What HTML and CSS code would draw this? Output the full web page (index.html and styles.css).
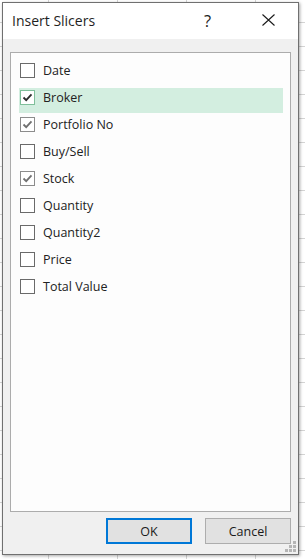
FILE: index.html
```html
<!DOCTYPE html>
<html lang="en">
<head>
    <meta charset="UTF-8">
    <meta name="viewport" content="width=device-width, initial-scale=1.0">
    <title>Insert Slicers</title>
    <link rel="stylesheet" href="styles.css">
</head>
<body>
    <div class="dialog">
        <div class="title-bar">
            <div class="title">Insert Slicers</div>
            <div class="help">?</div>
            <div class="close">
                <svg width="13" height="12" viewBox="0 0 13 12">
                    <path d="M0.5 0.5 L12.5 11.5 M12.5 0.5 L0.5 11.5" stroke="#1a1a1a" stroke-width="1.1" fill="none"/>
                </svg>
            </div>
        </div>

        <div class="dialog-body">
            <div class="field-list">
                <div class="field-row">
                    <span class="checkbox"></span>
                    <span class="field-name">Date</span>
                </div>
                <div class="field-row selected">
                    <span class="checkbox checked focus">
                        <svg width="13" height="13" viewBox="0 0 13 13"><path d="M2.5 6.5 L5.2 9.2 L10.5 3.3" stroke="#2b2b2b" stroke-width="1.8" fill="none"/></svg>
                    </span>
                    <span class="field-name">Broker</span>
                </div>
                <div class="field-row">
                    <span class="checkbox checked">
                        <svg width="13" height="13" viewBox="0 0 13 13"><path d="M2.5 6.5 L5.2 9.2 L10.5 3.3" stroke="#707070" stroke-width="1.8" fill="none"/></svg>
                    </span>
                    <span class="field-name">Portfolio No</span>
                </div>
                <div class="field-row">
                    <span class="checkbox"></span>
                    <span class="field-name">Buy/Sell</span>
                </div>
                <div class="field-row">
                    <span class="checkbox checked">
                        <svg width="13" height="13" viewBox="0 0 13 13"><path d="M2.5 6.5 L5.2 9.2 L10.5 3.3" stroke="#707070" stroke-width="1.8" fill="none"/></svg>
                    </span>
                    <span class="field-name">Stock</span>
                </div>
                <div class="field-row">
                    <span class="checkbox"></span>
                    <span class="field-name">Quantity</span>
                </div>
                <div class="field-row">
                    <span class="checkbox"></span>
                    <span class="field-name">Quantity2</span>
                </div>
                <div class="field-row">
                    <span class="checkbox"></span>
                    <span class="field-name">Price</span>
                </div>
                <div class="field-row">
                    <span class="checkbox"></span>
                    <span class="field-name">Total Value</span>
                </div>
            </div>

            <div class="buttons">
                <button class="btn btn-default">OK</button>
                <button class="btn">Cancel</button>
            </div>
        </div>

        <div class="grip">
            <svg width="12" height="12" viewBox="0 0 12 12" fill="#b5b5b5">
                <rect x="8" y="0" width="3" height="3"/>
                <rect x="4" y="4" width="3" height="3"/>
                <rect x="8" y="4" width="3" height="3"/>
                <rect x="0" y="8" width="3" height="3"/>
                <rect x="4" y="8" width="3" height="3"/>
                <rect x="8" y="8" width="3" height="3"/>
            </svg>
        </div>
    </div>
</body>
</html>
```

FILE: styles.css
```css
* {
    margin: 0;
    padding: 0;
    box-sizing: border-box;
    font-family: 'Open Sans', 'Noto Sans', sans-serif;
}

body {
    width: 305px;
    height: 559px;
    overflow: hidden;
    background-color: #fff;
    background-image:
        linear-gradient(#d4d4d4 1px, transparent 1px),
        linear-gradient(90deg, #d4d4d4 1px, transparent 1px);
    background-size: 100% 24px, 69px 100%;
    background-position: 0 -2px, 48px 0;
    padding: 2px 0 0 2px;
}

.dialog {
    position: relative;
    width: 297px;
    height: 553px;
    background: #f0f0f0;
    border: 1px solid #707070;
    box-shadow: 1px 1px 3px rgba(0, 0, 0, 0.35);
    display: flex;
    flex-direction: column;
}

.title-bar {
    height: 36px;
    background: #fff;
    display: flex;
    align-items: center;
    flex-shrink: 0;
}

.title {
    flex: 1;
    padding-left: 9px;
    font-size: 14px;
    color: #1f1f1f;
    margin-top: -1px;
}

.help {
    width: 14px;
    font-size: 16.5px;
    color: #1f1f1f;
    margin-right: 44px;
    margin-top: -2px;
}

.close {
    width: 13px;
    height: 12px;
    margin-right: 23px;
    margin-top: -2px;
}

.close svg {
    display: block;
}

.dialog-body {
    flex: 1;
    padding: 13px 7px 9px 7px;
    display: flex;
    flex-direction: column;
}

.field-list {
    height: 460px;
    background: #fdfdfd;
    border: 1px solid #acacac;
    padding: 8px 7px 0 8px;
    display: flex;
    flex-direction: column;
    gap: 2px;
}

.field-row {
    height: 25px;
    display: flex;
    align-items: flex-start;
    padding-left: 1px;
}

.field-row.selected {
    background: #d3eee0;
}

.checkbox {
    width: 15px;
    height: 15px;
    margin-top: 2px;
    border: 1px solid #6a6a6a;
    background: #fff;
    display: flex;
    align-items: center;
    justify-content: center;
    flex-shrink: 0;
}

.checkbox.checked {
    border-color: #8c8c8c;
}

.checkbox.focus {
    border-color: #7fbf9a;
    background: #fff;
}

.checkbox svg {
    display: block;
}

.field-name {
    margin-left: 8px;
    font-size: 12.5px;
    line-height: 19px;
    color: #222;
}

.buttons {
    display: flex;
    justify-content: flex-end;
    gap: 13px;
    margin-top: 6px;
}

.btn {
    width: 86px;
    height: 26px;
    background: #e1e1e1;
    border: 1px solid #adadad;
    font-size: 12.5px;
    color: #1a1a1a;
}

.btn-default {
    border: 2px solid #0078d7;
}

.grip {
    position: absolute;
    right: 1px;
    bottom: 1px;
    width: 12px;
    height: 12px;
}

.grip svg {
    display: block;
}
```
